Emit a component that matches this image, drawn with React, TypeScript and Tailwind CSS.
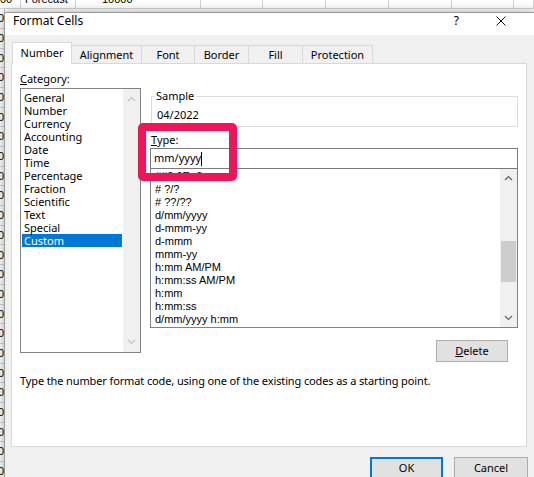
import React from "react";

// spreadsheet column widths behind the dialog
const sheetCols = [21, 55, 125, 62, 63, 63, 63, 62, 20];

const categories = [
  "General",
  "Number",
  "Currency",
  "Accounting",
  "Date",
  "Time",
  "Percentage",
  "Fraction",
  "Scientific",
  "Text",
  "Special",
  "Custom",
];

const formatCodes = [
  "##0.0E+0",
  "# ?/?",
  "# ??/??",
  "d/mm/yyyy",
  "d-mmm-yy",
  "d-mmm",
  "mmm-yy",
  "h:mm AM/PM",
  "h:mm:ss AM/PM",
  "h:mm",
  "h:mm:ss",
  "d/mm/yyyy h:mm",
];

const tabs = [
  { label: "Alignment", w: "w-[70px]" },
  { label: "Font", w: "w-[53px]" },
  { label: "Border", w: "w-[54px]" },
  { label: "Fill", w: "w-[54px]" },
  { label: "Protection", w: "w-[70px]" },
];

function Chevron({ up, color }: { up?: boolean; color: string }) {
  return (
    <svg width="9" height="6" viewBox="0 0 9 6">
      <path
        d={up ? "M1 5L4.5 1.5L8 5" : "M1 1L4.5 4.5L8 1"}
        fill="none"
        stroke={color}
        strokeWidth="1.2"
      />
    </svg>
  );
}

function Sheet() {
  return (
    <div className="absolute inset-0 flex flex-col font-['Liberation_Sans',sans-serif] text-[11px] text-black">
      <div className="-mt-[10.5px]" />
      {/* top row, mostly hidden by the dialog */}
      <div className="flex h-[19.7px] shrink-0 border-b border-[#d4d4d4]">
        {sheetCols.map((w, i) => (
          <div
            key={i}
            style={{ width: w }}
            className="shrink-0 flex items-center border-r border-[#d4d4d4] pl-[3px] overflow-hidden"
          >
            {i === 0 && <span className="-ml-[3px]">00</span>}
            {i === 1 && <span className="ml-[1px]">Forecast</span>}
            {i === 2 && <span className="ml-[23px]">10000</span>}
          </div>
        ))}
      </div>
      {Array.from({ length: 24 }).map((_, r) => (
        <div key={r} className="flex h-[19.7px] shrink-0 border-b border-[#d4d4d4]">
          <div className="w-[5px] shrink-0 flex items-center justify-end border-r border-[#c8c8c8]">
            <span className="shrink-0">0</span>
          </div>
        </div>
      ))}
    </div>
  );
}

function Dialog() {
  return (
    <div className="absolute left-[4px] top-[12px] w-[531px] h-[480px] border border-[#9a9a9a] bg-[#f0f0f0] shadow-[0_0_10px_rgba(0,0,0,0.35)]">
      {/* Title bar */}
      <div className="h-[22px] bg-white flex items-start pl-[8px] text-[12px] leading-[15px]">
        <span>Format Cells</span>
        <div className="ml-auto flex items-center h-[15px]">
          <span className="text-[12px] mr-[37px]">?</span>
          <svg width="10" height="10" viewBox="0 0 10 10" className="mr-[28px]">
            <path d="M0.5 0.5L9.5 9.5M9.5 0.5L0.5 9.5" stroke="#111" strokeWidth="1" />
          </svg>
        </div>
      </div>

      {/* Body */}
      <div className="pl-[6px] pt-[7px]">
        {/* Tabs */}
        <div className="relative z-10 flex items-end h-[21px] pl-[1px]">
          <div className="w-[60px] h-[22px] -mb-px bg-white border-t border-x border-[#d9d9d9] flex items-center justify-center">
            Number
          </div>
          {tabs.map((t) => (
            <div
              key={t.label}
              className={`${t.w} h-[18px] border-t border-r border-[#d9d9d9] flex items-center justify-center pt-[1px]`}
            >
              {t.label}
            </div>
          ))}
        </div>

        {/* Panel */}
        <div className="w-[516px] h-[384px] border border-[#d9d9d9] bg-white px-[8px] pt-[7px]">
          <div className="flex">
            {/* Category column */}
            <div className="w-[122px]">
              <div className="h-[16px] leading-[16px]">
                <span className="underline">C</span>ategory:
              </div>
              <div className="mt-[1px] h-[265px] border border-[#828282] flex">
                <div className="flex-1 pt-[2px] px-[1px]">
                  {categories.map((c) => (
                    <div
                      key={c}
                      className={`h-[13px] leading-[13px] pl-[2px] ${
                        c === "Custom" ? "bg-[#0078d7] text-white" : ""
                      }`}
                    >
                      {c}
                    </div>
                  ))}
                </div>
                <div className="w-[17px] bg-[#f0f0f0] flex flex-col justify-between">
                  <div className="h-[20px] flex items-center justify-center">
                    <Chevron up color="#c2c2c2" />
                  </div>
                  <div className="h-[20px] flex items-center justify-center">
                    <Chevron color="#c2c2c2" />
                  </div>
                </div>
              </div>
            </div>

            {/* Right column */}
            <div className="ml-[9px] w-[369px] flex flex-col">
              <fieldset className="mt-[17px] ml-[1px] w-[367px] border border-[#dcdcdc]">
                <legend className="ml-[3px] pl-[1px] pr-[2px] leading-[16px]">Sample</legend>
                <div className="pl-[5px] pt-[3px] pb-[3px] leading-[16px]">04/2022</div>
              </fieldset>

              <div className="mt-[5px] pl-[1px] h-[16px] leading-[16px]">
                <span className="underline">T</span>ype:
              </div>

              <div className="h-[21px] border border-[#7a7a7a] flex items-center pl-[3px]">
                <span>mm/yyyy</span>
                <span className="inline-block w-px h-[14px] bg-black" />
              </div>

              <div className="h-[159px] border-x border-b border-[#828282] flex overflow-hidden">
                <div className="flex-1 pt-[1px] pl-[4px] font-['Liberation_Sans',sans-serif] text-[11px] overflow-hidden">
                  {formatCodes.map((f) => (
                    <div key={f} className="h-[13px] leading-[13px] whitespace-nowrap">
                      {f}
                    </div>
                  ))}
                </div>
                <div className="w-[17px] bg-[#f0f0f0] flex flex-col items-center">
                  <div className="h-[18px] w-full flex items-center justify-center">
                    <Chevron up color="#606060" />
                  </div>
                  <div className="h-[54px]" />
                  <div className="h-[41px] w-[15px] bg-[#cdcdcd]" />
                  <div className="flex-1" />
                  <div className="h-[18px] w-full flex items-center justify-center">
                    <Chevron color="#606060" />
                  </div>
                </div>
              </div>

              <div className="mt-[12px] self-end mr-[10px] w-[72px] h-[22px] border border-[#adadad] bg-[#e1e1e1] flex items-center justify-center">
                <span>
                  <span className="underline">D</span>elete
                </span>
              </div>
            </div>
          </div>

          <div className="mt-[11px] leading-[16px] tracking-[-0.12px]">
            Type the number format code, using one of the existing codes as a starting point.
          </div>
        </div>

        {/* Buttons */}
        <div className="mt-[10px] w-[517px] flex justify-end gap-[11px]">
          <div className="w-[73px] h-[23px] border-2 border-[#0078d7] bg-[#e1e1e1] flex items-center justify-center">
            OK
          </div>
          <div className="w-[74px] h-[23px] border border-[#adadad] bg-[#e1e1e1] flex items-center justify-center">
            Cancel
          </div>
        </div>
      </div>
    </div>
  );
}

export default function App() {
  return (
    <div className="relative w-[534px] h-[477px] overflow-hidden bg-white font-['Noto_Sans',sans-serif] text-[11px] text-black">
      <Sheet />
      <Dialog />
      {/* pink annotation box */}
      <div className="absolute left-[138px] top-[123px] w-[99px] h-[58px] border-[8px] border-[#f0145a] rounded-[5px]" />
    </div>
  );
}
